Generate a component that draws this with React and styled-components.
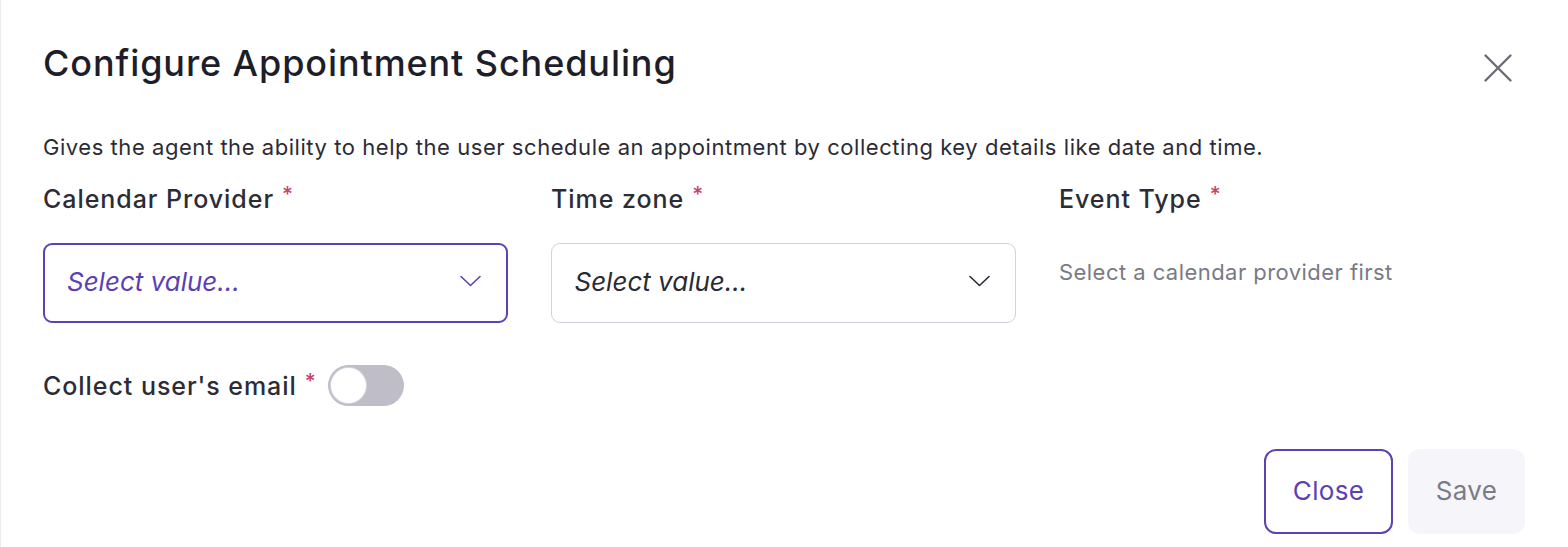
import React from "react";
import styled, { createGlobalStyle } from "styled-components";

const Global = createGlobalStyle`
  * { box-sizing: border-box; }
  html, body { margin: 0; padding: 0; background: #ffffff; }
  body { font-family: Inter, "Liberation Sans", Arial, sans-serif; }
`;

const Dialog = styled.div`
  width: 1568px;
  min-height: 547px;
  background: #ffffff;
  border-left: 1px solid #ececf0;
  padding: 41px 43px 12px 42px;
  display: flex;
  flex-direction: column;
`;

const Header = styled.div`
  display: flex;
  align-items: center;
  justify-content: space-between;
  height: 44px;
`;

const Title = styled.h1`
  margin: 0;
  font-size: 36px;
  line-height: 44px;
  font-weight: 500;
  color: #1e1e2a;
  letter-spacing: 0.9px;
`;

const CloseIcon = styled.button`
  border: none;
  background: transparent;
  padding: 0;
  width: 30px;
  height: 30px;
  margin-right: 12px;
  margin-top: 10px;
  display: flex;
  align-items: center;
  justify-content: center;
  cursor: pointer;
`;

const Description = styled.p`
  margin: 48px 0 0;
  font-size: 22px;
  line-height: 28px;
  letter-spacing: 0.55px;
  color: #2b2b35;
`;

const Fields = styled.div`
  margin-top: 22px;
  display: grid;
  grid-template-columns: repeat(3, 465px);
  column-gap: 43px;
`;

const Field = styled.div`
  display: flex;
  flex-direction: column;
  gap: 28px;
`;

const Label = styled.label`
  font-size: 25px;
  line-height: 32px;
  font-weight: 500;
  letter-spacing: 0.95px;
  color: #2c2c36;
  display: flex;
  align-items: center;
  gap: 8px;
`;

const Req = styled.span`
  color: #c8436a;
  font-size: 21px;
  align-self: flex-start;
  line-height: 24px;
  letter-spacing: 0;
`;

const Select = styled.div`
  height: 80px;
  border: ${(p) => (p.$focused ? "2px solid #5c42b3" : "1.5px solid #d2d2da")};
  border-radius: 9px;
  display: flex;
  align-items: center;
  justify-content: space-between;
  padding: 0 25px 4px ${(p) => (p.$focused ? "22px" : "22.5px")};
  background: #fff;
`;

const Placeholder = styled.span`
  font-size: 26px;
  font-style: italic;
  color: ${(p) => (p.$focused ? "#5a3fb5" : "#2a2a33")};
`;

const Helper = styled.span`
  margin-top: 15px;
  font-size: 22px;
  line-height: 28px;
  letter-spacing: 0.45px;
  color: #7a7a84;
`;

const ToggleRow = styled.div`
  margin-top: 42px;
  display: flex;
  align-items: center;
  gap: 12px;
`;

const Switch = styled.div`
  width: 76px;
  height: 41px;
  border-radius: 21px;
  background: #bebdc8;
  display: flex;
  align-items: center;
  padding: 0 3px;
`;

const Knob = styled.div`
  width: 35px;
  height: 35px;
  border-radius: 50%;
  background: #ffffff;
  box-shadow: 0 0 0 1px #d6d6dd;
`;

const Footer = styled.div`
  margin-top: 43px;
  display: flex;
  justify-content: flex-end;
  gap: 15px;
`;

const Button = styled.button`
  height: 85px;
  width: ${(p) => p.$w}px;
  border-radius: 12px;
  font-family: inherit;
  font-size: 26px;
  letter-spacing: 0.3px;
  padding: 0 0 3px;
  cursor: pointer;
  border: ${(p) => (p.$primary ? "2px solid #5c42b3" : "none")};
  background: ${(p) => (p.$primary ? "#ffffff" : "#f5f5fa")};
  color: ${(p) => (p.$primary ? "#5a3fb5" : "#7b7b86")};
`;

const Chevron = ({ color }) => (
  <svg width="21" height="12" viewBox="0 0 21 12" fill="none">
    <polyline points="1,1.5 10.5,10.5 20,1.5" stroke={color} strokeWidth="1.6" strokeLinecap="round" strokeLinejoin="round" />
  </svg>
);

export default function App() {
  return (
    <>
      <Global />
      <Dialog>
        <Header>
          <Title>Configure Appointment Scheduling</Title>
          <CloseIcon aria-label="Close">
            <svg width="28" height="28" viewBox="0 0 28 28">
              <path d="M1.5 1.5 L26.5 26.5 M26.5 1.5 L1.5 26.5" stroke="#6d6d79" strokeWidth="2.4" strokeLinecap="round" />
            </svg>
          </CloseIcon>
        </Header>
        <Description>
          Gives the agent the ability to help the user schedule an appointment by collecting key details like date and time.
        </Description>
        <Fields>
          <Field>
            <Label>
              Calendar Provider<Req>*</Req>
            </Label>
            <Select $focused>
              <Placeholder $focused>Select value...</Placeholder>
              <Chevron color="#5c42b3" />
            </Select>
          </Field>
          <Field>
            <Label>
              Time zone<Req>*</Req>
            </Label>
            <Select>
              <Placeholder>Select value...</Placeholder>
              <Chevron color="#2a2a33" />
            </Select>
          </Field>
          <Field>
            <Label>
              Event Type<Req>*</Req>
            </Label>
            <Helper>Select a calendar provider first</Helper>
          </Field>
        </Fields>
        <ToggleRow>
          <Label>
            Collect user's email<Req>*</Req>
          </Label>
          <Switch>
            <Knob />
          </Switch>
        </ToggleRow>
        <Footer>
          <Button $primary $w={129}>Close</Button>
          <Button $w={117}>Save</Button>
        </Footer>
      </Dialog>
    </>
  );
}
